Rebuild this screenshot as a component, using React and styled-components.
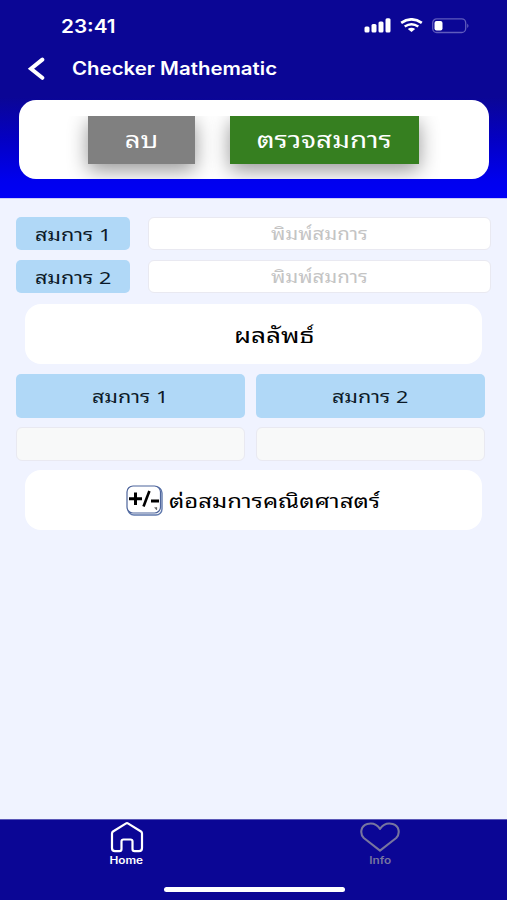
import styled, { createGlobalStyle } from 'styled-components';

const GlobalStyle = createGlobalStyle`
    * {
        box-sizing: border-box;
    }
    body {
        margin: 0;
        font-family: 'Noto Sans Thai Looped', 'Noto Sans', sans-serif;
    }
`;

const Screen = styled.div`
    width: 100%;
    height: 900px;
    display: flex;
    flex-direction: column;
    overflow: hidden;
    background: #f0f3ff;
`;
const Header = styled.header`
    height: 199px;
    flex: none;
    color: #fff;
    border-bottom: 1px solid #c9ccf8;
    background: linear-gradient(
        #0b0695 0,
        #0b0695 97px,
        #0400c4 140px,
        #0000ee 180px,
        #0000f6 198px
    );
`;
const StatusBar = styled.div`
    height: 52px;
    padding: 1px 37px 0 61px;
    display: flex;
    align-items: center;
    justify-content: space-between;
`;
const StatusIcons = styled.div`
    padding-bottom: 2px;
    display: flex;
    align-items: center;
    gap: 9px;
`;
const NavBar = styled.div`
    height: 34px;
    padding-left: 27px;
    display: flex;
    align-items: center;
    gap: 25px;
`;
const Text = styled.span`
    display: inline-block;
    white-space: pre;
    font-size: ${(props) => props.$size}px;
    line-height: 1.2;
    transform: scaleX(${(props) => props.$stretch || 1.25});
`;
const LatinText = styled(Text)`
    font-family: Inter, sans-serif;
    font-weight: 600;
    transform-origin: ${(props) => props.$origin || 'left'};
`;
const ActionCard = styled.div`
    width: 470px;
    height: 79px;
    margin: 14px 0 0 19px;
    padding: 16px 70px 15px 69px;
    display: flex;
    gap: 35px;
    overflow: hidden;
    border-radius: 17px;
    background: #fff;
`;
const ActionButton = styled.button`
    flex: 0 0 ${(props) => props.$width}px;
    height: 48px;
    padding: 0 0 2px;
    border: none;
    color: #fff;
    font-family: inherit;
    background: ${(props) => props.$color};
    box-shadow: 0 6px 20px rgba(0, 0, 0, 0.42);
    clip-path: inset(0 -24px -24px -24px);
`;
const Content = styled.main`
    flex: 1;
    padding: 18px 16px 0;
`;
const EquationRow = styled.div`
    display: flex;
    gap: 18px;
    margin-bottom: 10px;
`;
const Tag = styled.div`
    width: ${(props) => props.$width}px;
    height: ${(props) => props.$height}px;
    padding-top: 1px;
    display: flex;
    align-items: center;
    justify-content: center;
    border-radius: 5px;
    color: #0c1a28;
    background: #b0d8f7;
`;
const Field = styled.div`
    width: ${(props) => props.$width}px;
    height: ${(props) => (props.$disabled ? 34 : 33)}px;
    display: flex;
    align-items: center;
    justify-content: center;
    border: 1px solid #e9e9f1;
    border-radius: 6px;
    color: #c4c4c4;
    background: ${(props) => (props.$disabled ? '#f8f9f9' : '#fff')};
`;
const Panel = styled.div`
    width: 457px;
    height: 60px;
    margin-left: 9px;
    padding-left: ${(props) => props.$indent || 0}px;
    display: flex;
    align-items: center;
    justify-content: ${(props) => (props.$start ? 'flex-start' : 'center')};
    gap: 6px;
    border-radius: 16px;
    color: #000;
    background: #fff;
`;
const StartText = styled(Text)`
    padding-bottom: 3px;
    transform-origin: left;
`;
const Equations = styled.div`
    padding-bottom: 1px;
`;
const Results = styled.div`
    display: grid;
    grid-template-columns: 229px 229px;
    gap: 9px 11px;
    margin: 10px 0 9px;
`;
const TabBar = styled.nav`
    height: 81px;
    flex: none;
    display: flex;
    flex-direction: column;
    border-top: 1px solid #5a57b8;
    background: #0b0695;
`;
const Tabs = styled.div`
    height: 66px;
    display: grid;
    grid-template-columns: 253px 254px;
`;
const Tab = styled.div`
    padding-top: 2px;
    display: flex;
    flex-direction: column;
    align-items: center;
    gap: 1px;
    color: ${(props) => (props.$active ? '#fff' : '#77759f')};
`;
const HomeIndicator = styled.div`
    width: 181px;
    height: 5px;
    margin: 1px 0 0 164px;
    border-radius: 3px;
    background: #fff;
`;

const SignalIcon = () => (
    <svg width='27' height='15' viewBox='0 0 27 15' fill='#fff'>
        <rect x='0.5' y='8.5' width='5' height='6' rx='1.5' />
        <rect x='7.5' y='6' width='5' height='8.5' rx='1.5' />
        <rect x='14.5' y='3.5' width='5' height='11' rx='1.5' />
        <rect x='21.5' y='0.2' width='5' height='14.3' rx='1.5' />
    </svg>
);
const WifiIcon = () => (
    <svg width='23' height='15' viewBox='0 0 23 15' fill='none' stroke='#fff'>
        <path d='M1.2 4.8 Q11.5 -2 21.8 4.8' strokeWidth='2.8' />
        <path d='M4.7 8.6 Q11.5 3.8 18.3 8.6' strokeWidth='2.5' />
        <path d='M11.5 14 L7.8 11.1 Q11.5 8.3 15.2 11.1 Z' fill='#fff' stroke='none' />
    </svg>
);
const BatteryIcon = () => (
    <svg width='38' height='16' viewBox='0 0 38 16'>
        <rect x='0.7' y='0.9' width='33' height='13.6' rx='4' fill='none' stroke='#5f5bbd' strokeWidth='1.3' />
        <path d='M35.2 5.4 Q37.8 7.7 35.2 10 Z' fill='#5f5bbd' />
        <rect x='2.5' y='3' width='8' height='9.5' rx='2' fill='#fff' />
    </svg>
);
const BackIcon = () => (
    <svg width='20' height='24' viewBox='0 0 20 24' fill='none' stroke='#fff' strokeWidth='4'>
        <path d='M15.3 2.6 L4 11.8 L15.3 20.8' strokeLinecap='round' />
    </svg>
);
const PlusMinusIcon = () => (
    <svg width='37' height='31' viewBox='0 0 37 31' fill='none'>
        <rect x='2' y='2' width='34' height='28' rx='6' stroke='#6079ad' strokeWidth='1.4' />
        <rect x='1' y='1' width='33.5' height='27' rx='6' fill='#fff' stroke='#4d649b' strokeWidth='1.2' />
        <path d='M3 13.7h13M9.5 7.5v12.4M25 16h8' stroke='#000' strokeWidth='3' />
        <path d='M23.4 6 L17.5 21.5' stroke='#000' strokeWidth='2.6' />
        <path d='M29 22q0 2 1.6 2.6v-2.4' stroke='#555' strokeWidth='1' />
    </svg>
);
const HomeIcon = () => (
    <svg width='34' height='31' viewBox='0 0 34 31' fill='none' stroke='currentColor' strokeWidth='2.2' strokeLinejoin='round'>
        <path d='M15.7 1.6 Q17 .8 18.3 1.6 L31 9.5 Q32 10.2 32 11.4 V26 Q32 29.2 29 29.2 H24.6 Q22.5 29.2 22.5 27 V19.3 Q22.5 17.5 20.5 17.5 H13.5 Q11.5 17.5 11.5 19.3 V27 Q11.5 29.2 9.4 29.2 H5 Q2 29.2 2 26 V11.4 Q2 10.2 3 9.5 Z' />
    </svg>
);
const HeartIcon = () => (
    <svg width='40' height='31' viewBox='0 0 40 31' fill='none' stroke='currentColor' strokeWidth='2.1' strokeLinejoin='round'>
        <path d='M20 28.7 L3.8 16 C-.5 11.5 .8 3.8 7.2 2 C12 .8 17 2.5 20 6.8 C23 2.5 28 .8 32.8 2 C39.2 3.8 40.5 11.5 36.2 16 Z' />
    </svg>
);

const App = () => {
    return (
        <Screen>
            <GlobalStyle />
            <Header>
                <StatusBar>
                    <LatinText $size={18} $stretch={1.15}>23:41</LatinText>
                    <StatusIcons>
                        <SignalIcon />
                        <WifiIcon />
                        <BatteryIcon />
                    </StatusIcons>
                </StatusBar>
                <NavBar>
                    <BackIcon />
                    <LatinText $size={18} $stretch={1.135}>Checker Mathematic</LatinText>
                </NavBar>
                <ActionCard>
                    <ActionButton $width={107} $color='#808080'>
                        <Text $size={22}>ลบ</Text>
                    </ActionButton>
                    <ActionButton $width={189} $color='#367f20'>
                        <Text $size={22} $stretch={1.27}>ตรวจสมการ</Text>
                    </ActionButton>
                </ActionCard>
            </Header>
            <Content>
                <Equations>
                    {[1, 2].map((n) => (
                        <EquationRow key={n}>
                            <Tag $width={114} $height={33}>
                                <Text $size={17} $stretch={1.27}>สมการ {n}</Text>
                            </Tag>
                            <Field $width={343}>
                                <Text $size={17} $stretch={1.2}>พิมพ์สมการ</Text>
                            </Field>
                        </EquationRow>
                    ))}
                </Equations>
                <Panel $indent={41}>
                    <Text $size={21}>ผลลัพธ์</Text>
                </Panel>
                <Results>
                    {[1, 2].map((n) => (
                        <Tag key={n} $width={229} $height={44}>
                            <Text $size={17} $stretch={1.27}>สมการ {n}</Text>
                        </Tag>
                    ))}
                    <Field $width={229} $disabled />
                    <Field $width={229} $disabled />
                </Results>
                <Panel $start $indent={101}>
                    <PlusMinusIcon />
                    <StartText $size={20} $stretch={1.195}>ต่อสมการคณิตศาสตร์</StartText>
                </Panel>
            </Content>
            <TabBar>
                <Tabs>
                    <Tab $active>
                        <HomeIcon />
                        <LatinText $size={10} $stretch={1.18} $origin='center'>Home</LatinText>
                    </Tab>
                    <Tab>
                        <HeartIcon />
                        <LatinText $size={10} $stretch={1.18} $origin='center'>Info</LatinText>
                    </Tab>
                </Tabs>
                <HomeIndicator />
            </TabBar>
        </Screen>
    );
};

export default App;
